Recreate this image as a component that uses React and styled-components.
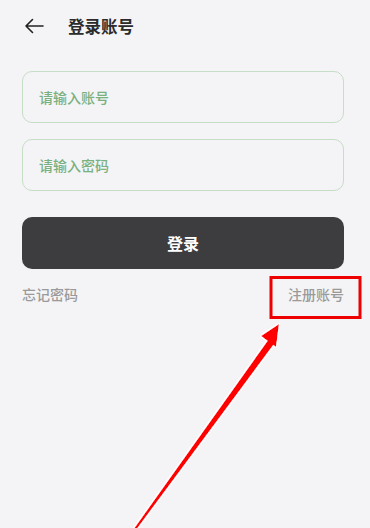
import React from "react";
import styled, { createGlobalStyle } from "styled-components";

const GlobalStyle = createGlobalStyle`
  html, body {
    margin: 0;
    padding: 0;
    background: #f4f4f6;
  }
  body {
    font-family: "Noto Sans CJK SC", "Noto Sans", sans-serif;
  }
`;

export default function App() {
  return (
    <>
      <GlobalStyle />
      <Page>
        <Header>
          <BackButton aria-label="back">
            <svg width="20" height="16" viewBox="0 0 20 16" fill="none">
              <path d="M19 8H2M8.5 1.5L2 8l6.5 6.5" stroke="#222" strokeWidth="1.6" strokeLinecap="round" strokeLinejoin="round" />
            </svg>
          </BackButton>
          <Title>登录账号</Title>
        </Header>

        <Form>
          <Field placeholder="请输入账号" />
          <Field placeholder="请输入密码" type="password" />
          <LoginButton>登录</LoginButton>
          <Links>
            <LinkText>忘记密码</LinkText>
            <LinkText>注册账号</LinkText>
          </Links>
        </Form>

        <Annotation width="370" height="528" viewBox="0 0 370 528">
          <defs>
            <filter id="halo" x="-20%" y="-20%" width="140%" height="140%">
              <feMorphology in="SourceAlpha" operator="dilate" radius="1.2" result="d" />
              <feFlood floodColor="#ffffff" />
              <feComposite in2="d" operator="in" result="w" />
              <feMerge>
                <feMergeNode in="w" />
                <feMergeNode in="SourceGraphic" />
              </feMerge>
            </filter>
          </defs>
          <rect x="271" y="277.5" width="89" height="40" fill="none" stroke="#ee0000" strokeWidth="3" />
          <g filter="url(#halo)">
            <path d="M133 530 L271 336 L277 340 L136 530 Z" fill="#ff0000" />
            <path d="M279 324 L261 336 L276 347 Z" fill="#ff0000" />
          </g>
        </Annotation>
      </Page>
    </>
  );
}

const Page = styled.div`
  position: relative;
  width: 370px;
  height: 528px;
  overflow: hidden;
  background: #f4f4f6;
`;

const Header = styled.div`
  display: flex;
  align-items: center;
  height: 52px;
  padding-left: 24px;
`;

const BackButton = styled.div`
  display: flex;
  align-items: center;
  width: 20px;
  height: 16px;
  margin-right: 24px;
`;

const Title = styled.div`
  font-size: 16.5px;
  font-weight: 700;
  color: #2b2b2b;
`;

const Form = styled.div`
  display: flex;
  flex-direction: column;
  padding: 19px 26px 0 22px;
`;

const Field = styled.input`
  box-sizing: border-box;
  height: 52px;
  margin-bottom: 16px;
  padding: 0 16px;
  border: 1px solid #c6ddc6;
  border-radius: 10px;
  background: transparent;
  font-family: inherit;
  font-size: 14px;
  font-weight: 500;
  outline: none;

  &::placeholder {
    color: #7bb07f;
  }
`;

const LoginButton = styled.button`
  height: 52px;
  margin-top: 10px;
  border: none;
  border-radius: 10px;
  background: #3d3d3f;
  color: #ffffff;
  font-family: inherit;
  font-size: 16px;
  font-weight: 700;
`;

const Links = styled.div`
  display: flex;
  justify-content: space-between;
  padding-top: 15px;
`;

const LinkText = styled.span`
  font-size: 14px;
  font-weight: 500;
  color: #9a9a9a;
`;

const Annotation = styled.svg`
  position: absolute;
  left: 0;
  top: 0;
  pointer-events: none;
`;
